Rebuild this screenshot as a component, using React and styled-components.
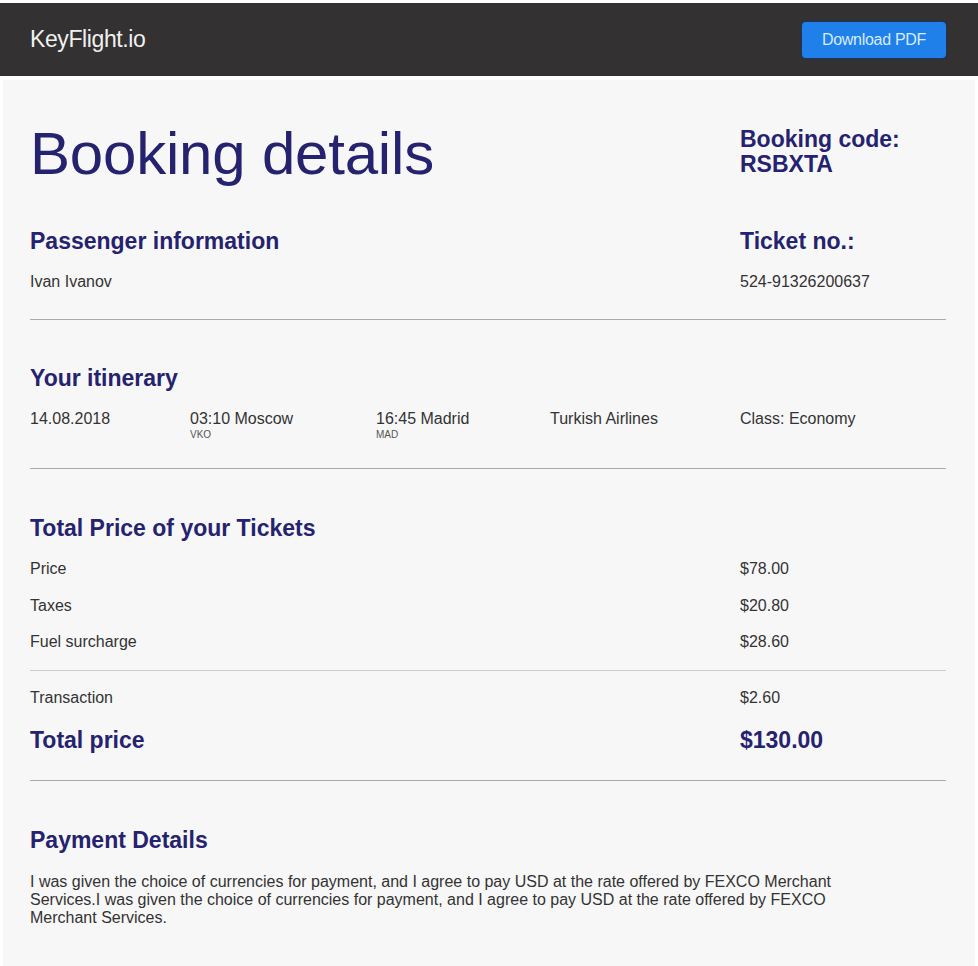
import React from "react";
import styled, { createGlobalStyle } from "styled-components";

const GlobalStyle = createGlobalStyle`
  html, body {
    margin: 0;
    padding: 0;
    background: #ffffff;
  }
  body {
    font-family: "Liberation Sans", Arial, sans-serif;
    color: #333;
  }
`;

const navy = "#25226f";

const itinerary = [
  { main: "14.08.2018" },
  { main: "03:10 Moscow", sub: "VKO" },
  { main: "16:45 Madrid", sub: "MAD" },
  { main: "Turkish Airlines" },
  { main: "Class: Economy" },
];

const fees = [
  { label: "Price", value: "$78.00" },
  { label: "Taxes", value: "$20.80" },
  { label: "Fuel surcharge", value: "$28.60" },
];

const App = () => {
  return (
    <>
      <GlobalStyle />
      <Page>
        <TopBar>
          <Brand>KeyFlight.io</Brand>
          <DownloadButton type="button">Download PDF</DownloadButton>
        </TopBar>

        <Sheet>
          <TwoCol>
            <Title>Booking details</Title>
            <CodeBlock>
              Booking code:
              <br />
              RSBXTA
            </CodeBlock>
          </TwoCol>

          <Section $top={38}>
            <TwoCol>
              <div>
                <SectionTitle>Passenger information</SectionTitle>
                <Text>Ivan Ivanov</Text>
              </div>
              <div>
                <SectionTitle>Ticket no.:</SectionTitle>
                <Text>524-91326200637</Text>
              </div>
            </TwoCol>
          </Section>

          <Section>
            <SectionTitle>Your itinerary</SectionTitle>
            <ItineraryRow>
              {itinerary.map((item) => (
                <Cell key={item.main}>
                  <Text>{item.main}</Text>
                  {item.sub && <Code>{item.sub}</Code>}
                </Cell>
              ))}
            </ItineraryRow>
          </Section>

          <Section $top={45} $bottom={26}>
            <SectionTitle>Total Price of your Tickets</SectionTitle>
            <FeeList>
              {fees.map((f) => (
                <FeeRow key={f.label}>
                  <Text>{f.label}</Text>
                  <Text>{f.value}</Text>
                </FeeRow>
              ))}
            </FeeList>
            <SubTotal>
              <FeeRow>
                <Text>Transaction</Text>
                <Text>$2.60</Text>
              </FeeRow>
              <FeeRow>
                <TotalLabel>Total price</TotalLabel>
                <TotalValue>$130.00</TotalValue>
              </FeeRow>
            </SubTotal>
          </Section>

          <LastSection>
            <SectionTitle>Payment Details</SectionTitle>
            <Paragraph>
              I was given the choice of currencies for payment, and I agree to
              pay USD at the rate offered by FEXCO Merchant Services.I was given
              the choice of currencies for payment, and I agree to pay USD at the
              rate offered by FEXCO Merchant Services.
            </Paragraph>
          </LastSection>
        </Sheet>
      </Page>
    </>
  );
};

const Page = styled.div`
  padding-top: 3px;
  min-height: 963px;
`;

const TopBar = styled.header`
  height: 73px;
  background: #333132;
  display: flex;
  align-items: center;
  justify-content: space-between;
  padding: 0 32px 0 30px;
  box-sizing: border-box;
`;

const Brand = styled.div`
  color: #f0f0f0;
  font-size: 23px;
  letter-spacing: -0.4px;
`;

const DownloadButton = styled.button`
  font-family: "Liberation Sans", Arial, sans-serif;
  background: #1f80ea;
  color: #d6ebff;
  border: 0;
  border-radius: 4px;
  width: 144px;
  height: 36px;
  padding: 0;
  font-size: 16px;
  letter-spacing: -0.3px;
  box-shadow: 0 0 3px rgba(0, 60, 140, 0.9);
  cursor: pointer;
`;

const Sheet = styled.main`
  margin: 4px 3px 0;
  background: #f7f7f7;
  padding: 39px 29px 40px 27px;
  min-height: 882px;
  box-sizing: border-box;
`;

const TwoCol = styled.div`
  display: grid;
  grid-template-columns: 710px 1fr;
  align-items: start;
`;

const Title = styled.h1`
  margin: 0;
  font-weight: 400;
  font-size: 60px;
  line-height: 70px;
  color: ${navy};
  letter-spacing: -0.2px;
`;

const CodeBlock = styled.div`
  margin-top: 8px;
  font-size: 23px;
  font-weight: 700;
  line-height: 25px;
  color: ${navy};
`;

const Section = styled.section`
  padding: ${(p) => p.$top ?? 44}px 0 ${(p) => p.$bottom ?? 27}px;
  border-bottom: 1px solid #aaa;
`;

const LastSection = styled.section`
  padding-top: 45px;
`;

const SectionTitle = styled.h2`
  margin: 0 0 17px;
  font-size: 23px;
  line-height: 28px;
  font-weight: 700;
  color: ${navy};
`;

const Text = styled.div`
  font-size: 16px;
  line-height: 20px;
  color: #333;
`;

const ItineraryRow = styled.div`
  display: grid;
  grid-template-columns: 160px 186px 174px 190px 1fr;
`;

const Cell = styled.div`
  display: flex;
  flex-direction: column;
`;

const Code = styled.span`
  font-size: 10px;
  line-height: 12px;
  color: #555;
`;

const FeeList = styled.div`
  display: flex;
  flex-direction: column;
  gap: 16.5px;
  padding-bottom: 18px;
  border-bottom: 1px solid #ccc;
`;

const SubTotal = styled.div`
  display: flex;
  flex-direction: column;
  gap: 18px;
  padding-top: 17px;
`;

const FeeRow = styled.div`
  display: grid;
  grid-template-columns: 710px 1fr;
  align-items: center;
`;

const TotalLabel = styled.div`
  font-size: 23px;
  line-height: 28px;
  font-weight: 700;
  color: ${navy};
`;

const TotalValue = styled(TotalLabel)``;

const Paragraph = styled.p`
  margin: 19px 0 0;
  max-width: 820px;
  font-size: 16px;
  line-height: 18px;
  color: #333;
`;

export default App;
